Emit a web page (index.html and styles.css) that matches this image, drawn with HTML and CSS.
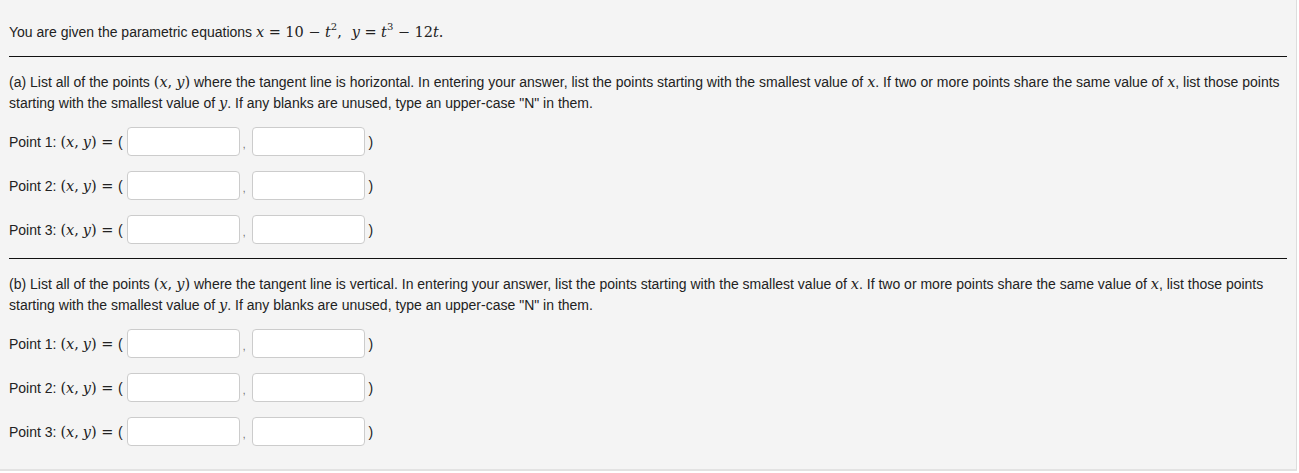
FILE: index.html
```html
<!DOCTYPE html>
<html lang="en">
<head>
    <meta charset="UTF-8">
    <title>Parametric Equations - Tangent Lines</title>
    <link rel="stylesheet" href="styles.css">
</head>
<body>
    <div class="panel">
        <p class="intro">You are given the parametric equations
            <span class="math"><i>x</i><span class="op">=</span>10<span class="op">&minus;</span><i>t</i><sup>2</sup>,<span class="qs"></span><i>y</i><span class="op">=</span><i>t</i><sup>3</sup><span class="op">&minus;</span>12<i>t</i>.</span>
        </p>

        <hr class="rule">

        <div class="part">
            <p class="question">(a) List all of the points <span class="math">(<i>x</i>,<span class="th"></span><i>y</i>)</span> where the tangent line is horizontal. In entering your answer, list the points starting with the smallest value of <span class="math"><i>x</i></span>. If two or more points share the same value of <span class="math"><i>x</i></span>, list those points starting with the smallest value of <span class="math"><i>y</i></span>. If any blanks are unused, type an upper-case "N" in them.</p>

            <div class="points">
                <div class="point-row">
                    <span class="label">Point 1: <span class="math">(<i>x</i>,<span class="th"></span><i>y</i>)<span class="op">=</span></span>(</span>
                    <input class="answer" type="text">
                    <span class="comma">,</span>
                    <input class="answer" type="text">
                    <span class="close">)</span>
                </div>
                <div class="point-row">
                    <span class="label">Point 2: <span class="math">(<i>x</i>,<span class="th"></span><i>y</i>)<span class="op">=</span></span>(</span>
                    <input class="answer" type="text">
                    <span class="comma">,</span>
                    <input class="answer" type="text">
                    <span class="close">)</span>
                </div>
                <div class="point-row">
                    <span class="label">Point 3: <span class="math">(<i>x</i>,<span class="th"></span><i>y</i>)<span class="op">=</span></span>(</span>
                    <input class="answer" type="text">
                    <span class="comma">,</span>
                    <input class="answer" type="text">
                    <span class="close">)</span>
                </div>
            </div>
        </div>

        <hr class="rule">

        <div class="part">
            <p class="question">(b) List all of the points <span class="math">(<i>x</i>,<span class="th"></span><i>y</i>)</span> where the tangent line is vertical. In entering your answer, list the points starting with the smallest value of <span class="math"><i>x</i></span>. If two or more points share the same value of <span class="math"><i>x</i></span>, list those points starting with the smallest value of <span class="math"><i>y</i></span>. If any blanks are unused, type an upper-case "N" in them.</p>

            <div class="points">
                <div class="point-row">
                    <span class="label">Point 1: <span class="math">(<i>x</i>,<span class="th"></span><i>y</i>)<span class="op">=</span></span>(</span>
                    <input class="answer" type="text">
                    <span class="comma">,</span>
                    <input class="answer" type="text">
                    <span class="close">)</span>
                </div>
                <div class="point-row">
                    <span class="label">Point 2: <span class="math">(<i>x</i>,<span class="th"></span><i>y</i>)<span class="op">=</span></span>(</span>
                    <input class="answer" type="text">
                    <span class="comma">,</span>
                    <input class="answer" type="text">
                    <span class="close">)</span>
                </div>
                <div class="point-row">
                    <span class="label">Point 3: <span class="math">(<i>x</i>,<span class="th"></span><i>y</i>)<span class="op">=</span></span>(</span>
                    <input class="answer" type="text">
                    <span class="comma">,</span>
                    <input class="answer" type="text">
                    <span class="close">)</span>
                </div>
            </div>
        </div>
    </div>
</body>
</html>
```

FILE: styles.css
```css
/* General Styles */
body {
    margin: 0;
    padding: 0;
    background-color: #fff;
    font-family: "Liberation Sans", Arial, sans-serif;
    font-size: 14px;
    color: #222;
}

/* Question panel */
.panel {
    width: 1278px;
    padding: 22px 9px 9px 9px;
    background-color: #f4f4f4;
    border-right: 1px solid #ddd;
    border-bottom: 2px solid #e2e2e2;
}

.intro {
    margin: 0 0 13px 0;
    line-height: 21px;
}

.rule {
    margin: 0;
    border: none;
    border-top: 1px solid #111;
    height: 0;
}

.part {
    padding: 15px 0 14px 0;
}

.question {
    margin: 0 0 13px 0;
    line-height: 21px;
}

/* Math bits */
.math {
    font-family: "DejaVu Serif", "Liberation Serif", serif;
    font-size: 14.5px;
    line-height: 1;
    white-space: nowrap;
}

.math i {
    font-style: italic;
}

.math sup {
    font-size: 10px;
    line-height: 0;
    vertical-align: 7px;
}

.op {
    padding: 0 4.5px;
}

.qs {
    display: inline-block;
    width: 10px;
}

.th {
    display: inline-block;
    width: 4px;
}

/* Answer rows */
.points {
    display: flex;
    flex-direction: column;
    gap: 15px;
}

.point-row {
    display: flex;
    align-items: center;
    height: 29px;
}

.label {
    white-space: pre;
    margin-right: 1px;
}

.answer {
    box-sizing: border-box;
    width: 113px;
    height: 29px;
    margin: 0 0 0 3px;
    padding: 4px 6px;
    background-color: #fff;
    border: 1px solid #ccc;
    border-radius: 4px;
    font-size: 13px;
}

.comma {
    width: 9px;
    text-align: center;
    font-size: 10px;
    padding-top: 6px;
    color: #666;
}

.close {
    margin-left: 4px;
}
```
